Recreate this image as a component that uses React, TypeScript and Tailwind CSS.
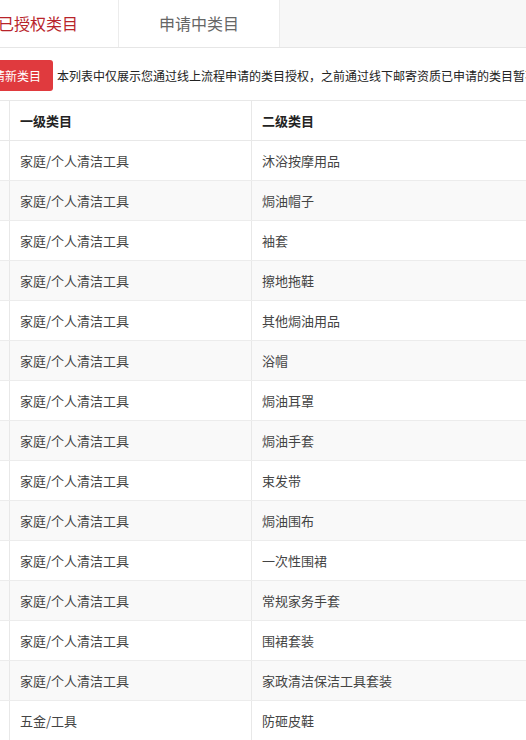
const rows: [string, string][] = [
  ['家庭/个人清洁工具', '沐浴按摩用品'],
  ['家庭/个人清洁工具', '焗油帽子'],
  ['家庭/个人清洁工具', '袖套'],
  ['家庭/个人清洁工具', '擦地拖鞋'],
  ['家庭/个人清洁工具', '其他焗油用品'],
  ['家庭/个人清洁工具', '浴帽'],
  ['家庭/个人清洁工具', '焗油耳罩'],
  ['家庭/个人清洁工具', '焗油手套'],
  ['家庭/个人清洁工具', '束发带'],
  ['家庭/个人清洁工具', '焗油围布'],
  ['家庭/个人清洁工具', '一次性围裙'],
  ['家庭/个人清洁工具', '常规家务手套'],
  ['家庭/个人清洁工具', '围裙套装'],
  ['家庭/个人清洁工具', '家政清洁保洁工具套装'],
  ['五金/工具', '防砸皮鞋'],
];

export default function App() {
  return (
    <div
      className="w-[526px] h-[740px] overflow-hidden bg-white text-[#333]"
      style={{ fontFamily: '"Microsoft YaHei", "Noto Sans CJK SC", sans-serif' }}
    >
      {/* tabs */}
      <div className="flex h-[48px] bg-[#f7f7f7] border-b border-[#e6e6e6]">
        <div className="ml-[-42px] w-[161px] shrink-0 flex items-center justify-center pb-[2px] bg-white border-r border-[#ececec] text-[16px] text-[#b8232a]">
          已授权类目
        </div>
        <div className="w-[161px] shrink-0 flex items-center justify-center pb-[2px] bg-white border-r border-[#ececec] text-[16px] text-[#666]">
          申请中类目
        </div>
      </div>

      {/* apply row */}
      <div className="flex items-center gap-[4px] mt-[12px] h-[31px] whitespace-nowrap">
        <button className="ml-[-31px] h-[31px] px-[12px] shrink-0 rounded-[3px] bg-[#e03a3e] text-white text-[12px]">
          申请新类目
        </button>
        <span className="text-[12px] text-[#222]">
          本列表中仅展示您通过线上流程申请的类目授权，之前通过线下邮寄资质已申请的类目暂不在此展示
        </span>
      </div>

      {/* table */}
      <div className="mt-[9px] border-t border-[#e8e8e8]">
        <div className="flex h-[40px] border-b border-[#e8e8e8] bg-white">
          <div className="w-[10px] shrink-0 border-r border-[#e8e8e8]" />
          <div className="w-[242px] shrink-0 pl-[10px] flex items-center border-r border-[#e8e8e8] text-[13px] font-bold text-[#222]">
            一级类目
          </div>
          <div className="flex-1 pl-[10px] flex items-center text-[13px] font-bold text-[#222]">
            二级类目
          </div>
        </div>
        {rows.map(([a, b], i) => (
          <div
            key={i}
            className={`flex h-[40px] border-b border-[#ececec] ${i % 2 === 1 ? 'bg-[#f9f9f9]' : 'bg-white'}`}
          >
            <div className="w-[10px] shrink-0 border-r border-[#e8e8e8]" />
            <div className="w-[242px] shrink-0 pl-[10px] flex items-center border-r border-[#e8e8e8] text-[13px] text-[#444]">
              {a}
            </div>
            <div className="flex-1 pl-[10px] flex items-center text-[13px] text-[#444]">{b}</div>
          </div>
        ))}
      </div>
    </div>
  );
}
